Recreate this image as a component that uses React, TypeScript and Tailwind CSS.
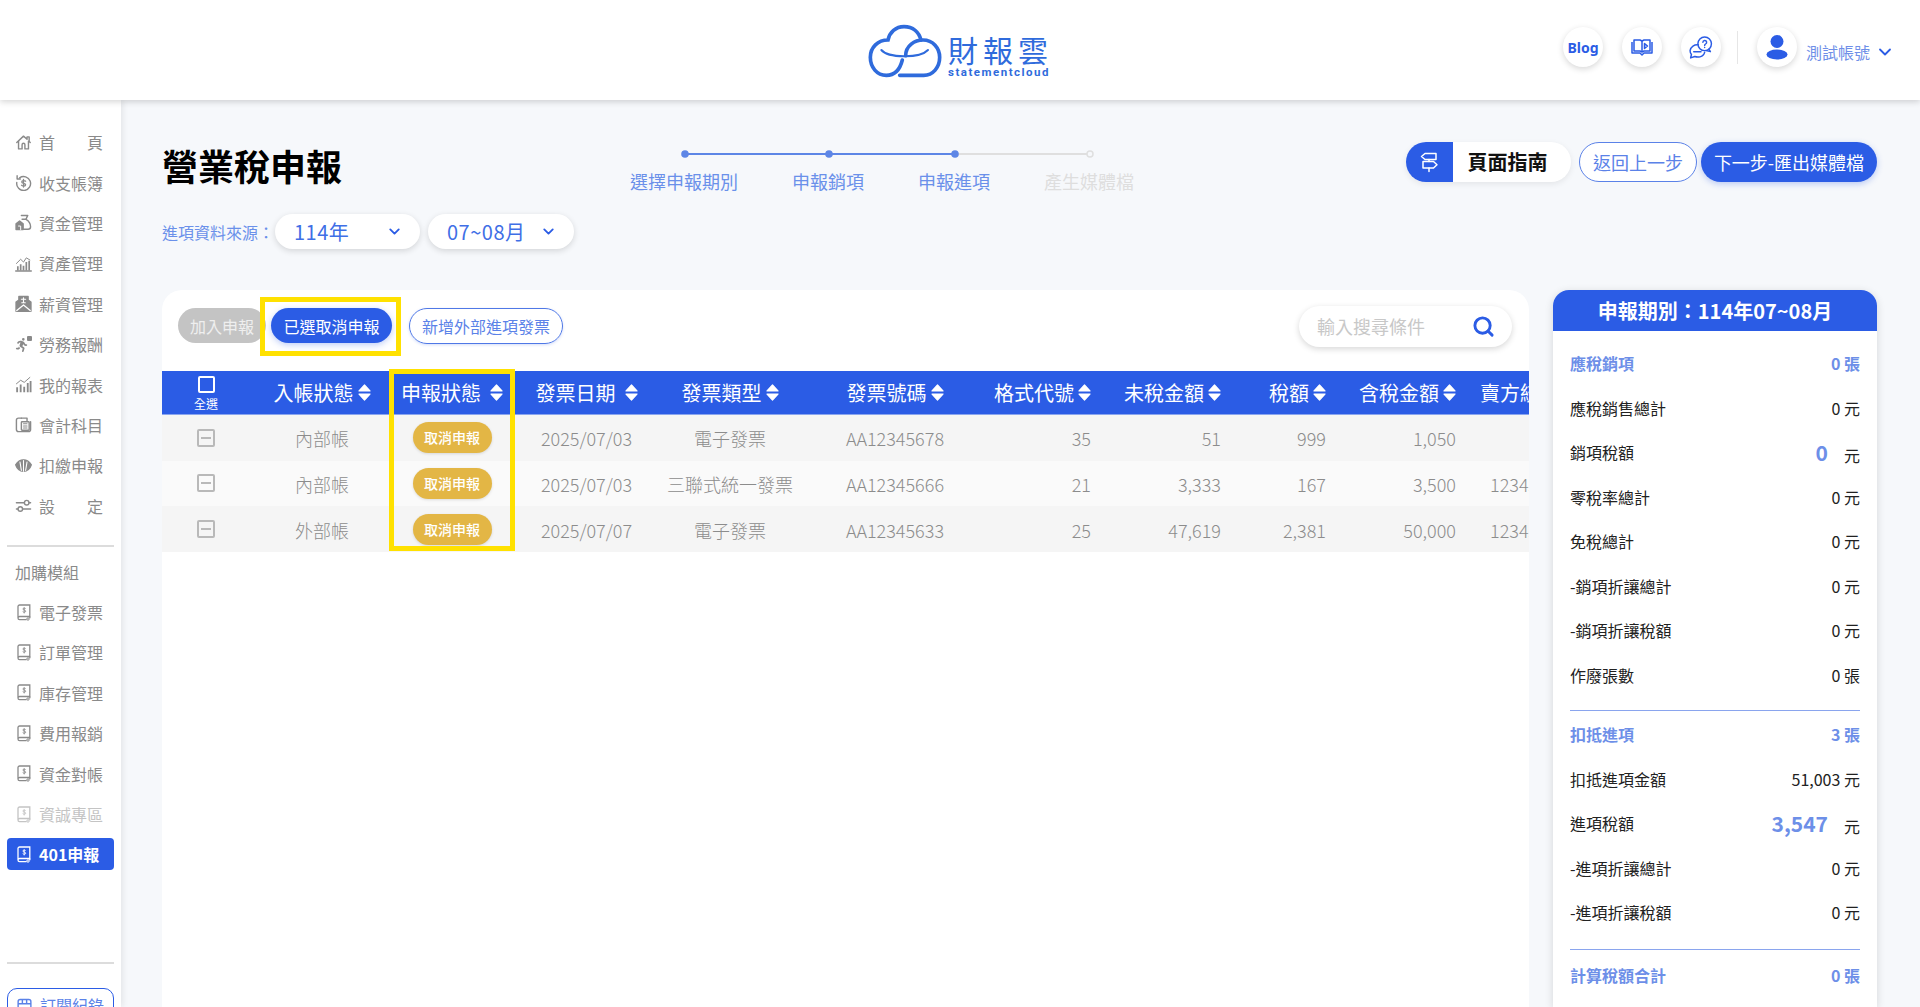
import React from 'react';
import { Search, ChevronDown } from 'lucide-react';
import { FaPersonRunning } from 'react-icons/fa6';

const Svg = ({ children, size = 17 }: { children: React.ReactNode; size?: number }) => (
  <svg width={size} height={size} viewBox="0 0 24 24" fill="none" stroke="currentColor" strokeWidth="2" strokeLinecap="round" strokeLinejoin="round" className="shrink-0">
    {children}
  </svg>
);

const HomeIcon = () => (
  <Svg>
    <path d="M2.500 12 12 3l5 4.500V4h3v6.500l1.500 1.500" />
    <path d="M5 10v11h5v-6a2 2 0 0 1 4 0v6h5V10" />
  </Svg>
);
const CycleDollarIcon = () => (
  <Svg>
    <path d="M6.500 5.500A9.800 9.800 0 1 1 2.500 12" />
    <path d="M3 2.500v4.500h4.500" />
    <path d="M15 10.200c-.7-1.300-5.500-1.500-5.500 1 0 2.500 5.500 1.400 5.500 4 0 2.500-5 2.200-5.800.7M12 7.500v11" strokeWidth="1.800" />
  </Svg>
);
const BagIcon = () => (
  <Svg>
    <path d="M9 2h9l-2.500 5.500c3.500 2 6.500 6.500 6.500 10.500 0 2.500-1.500 3.500-3.500 3.500H12" />
    <path d="M10 7.500h5.500" />
    <path d="M1.500 22v-8l5-4 5 4v8z" fill="currentColor" />
    <path d="M5 17h3v5" stroke="#fff" strokeWidth="1.400" />
  </Svg>
);
const AssetIcon = () => (
  <Svg>
    <path d="M1 22.500h22" />
    <path d="M4 22v-6M8 22v-9M12 22v-7M16 22V10M20 22V8" strokeWidth="2.400" strokeLinecap="butt" />
    <path d="M2 12l6-6 4 4 4-6 5 3" strokeWidth="1.400" />
  </Svg>
);
const MailIcon = () => (
  <Svg>
    <path d="M1.500 23V10l4-3V2h13v5l4 3v13z" fill="currentColor" />
    <path d="M2.500 22 12 14l9.500 8" stroke="#fff" strokeWidth="1.800" />
    <path d="M9 6h6M12 4v7M9.500 11h5" stroke="#fff" strokeWidth="1.600" />
  </Svg>
);
const RunIcon = () => (
  <span className="flex items-start w-[17px] shrink-0">
    <FaPersonRunning size={14} className="mt-[2px]" />
    <span className="w-[5px] h-[5px] bg-current rounded-[1px] -ml-[2px]" />
  </span>
);
const BarsIcon = () => (
  <Svg>
    <path d="M3 23v-7M8 23V12M13 23v-8M18 23V10M22 23V7" strokeWidth="2.600" strokeLinecap="butt" />
    <path d="M2 11l6-5 5 3 8-7" strokeWidth="1.400" />
  </Svg>
);
const CalcBookIcon = () => (
  <Svg>
    <path d="M9 3H5a3 3 0 0 0-3 3v13a3 3 0 0 0 3 3h14a3 3 0 0 0 3-3V8" />
    <rect x="9" y="8" width="11" height="12" rx="1" />
    <path d="M12 11h5M12 14h5M12 17h5" strokeWidth="1.500" />
    <path d="M9 3h8v4" />
  </Svg>
);
const FanIcon = () => (
  <Svg>
    <path d="M1 11c3-5 6-7 11-7s8 2 11 7c-2 6-6 9-11 9S3 17 1 11z" fill="currentColor" />
    <path d="M7 7l2 12M12 5v15M17 7l-2 12" stroke="#fff" strokeWidth="1.500" />
  </Svg>
);
const SliderIcon = () => (
  <Svg>
    <path d="M2 8h11M20 8h2M2 17h2M11 17h11" />
    <circle cx="16.500" cy="8" r="3.200" />
    <circle cx="7.500" cy="17" r="3.200" />
  </Svg>
);
const ModuleIcon = () => (
  <svg width="14" height="17" viewBox="0 0 14 17" fill="none" stroke="currentColor" className="shrink-0 ml-[2px] mr-[1px]">
    <path d="M2.600 1h10.200v11.500H2.600A1.600 1.600 0 0 0 1 14V2.600A1.600 1.600 0 0 1 2.600 1z" strokeWidth="1.300" />
    <path d="M1 14a1.600 1.600 0 0 0 1.600 1.600h7M12.800 12.500v1.800" strokeWidth="1.300" />
    <circle cx="11" cy="15" r="1.200" strokeWidth="1" />
    <path d="M8.600 4.600c-.4-.7-2.600-.9-2.700.4-.1 1.300 2.800.8 2.800 2.200 0 1.300-2.400 1.200-3 .4M7.200 3.400v6" strokeWidth="0.900" />
  </svg>
);

const Spread = ({ a, b }: { a: string; b: string }) => (
  <span className="flex justify-between w-16">
    <span>{a}</span>
    <span>{b}</span>
  </span>
);

const NavRow = ({ icon, children }: { icon: React.ReactNode; children: React.ReactNode }) => (
  <div className="flex items-center shrink-0 h-[40.4px] pl-[15px] gap-[7px] text-base text-[#8a8a8a] whitespace-nowrap">
    {icon}
    {children}
  </div>
);

const Sidebar = () => (
  <aside className="w-[121px] shrink-0 bg-white shadow-[2px_0_6px_rgba(0,0,0,0.08)] pt-[22px] relative z-10 flex flex-col overflow-hidden">
    <NavRow icon={<HomeIcon />}><Spread a="首" b="頁" /></NavRow>
    <NavRow icon={<CycleDollarIcon />}>收支帳簿</NavRow>
    <NavRow icon={<BagIcon />}>資金管理</NavRow>
    <NavRow icon={<AssetIcon />}>資產管理</NavRow>
    <NavRow icon={<MailIcon />}>薪資管理</NavRow>
    <NavRow icon={<RunIcon />}>勞務報酬</NavRow>
    <NavRow icon={<BarsIcon />}>我的報表</NavRow>
    <NavRow icon={<CalcBookIcon />}>會計科目</NavRow>
    <NavRow icon={<FanIcon />}>扣繳申報</NavRow>
    <NavRow icon={<SliderIcon />}><Spread a="設" b="定" /></NavRow>
    <div className="mx-[7px] mt-[19px] h-[2px] shrink-0 bg-[#dcdcdc]" />
    <div className="pl-[15px] mt-[13px] h-[24px] shrink-0 flex items-center text-base text-[#8a8a8a]">加購模組</div>
    <div className="mt-[8px] shrink-0">
      {['電子發票', '訂單管理', '庫存管理', '費用報銷', '資金對帳'].map((t) => (
        <NavRow key={t} icon={<ModuleIcon />}>{t}</NavRow>
      ))}
      <div className="opacity-50">
        <NavRow icon={<ModuleIcon />}>資誠專區</NavRow>
      </div>
    </div>
    <div className="mx-[7px] mt-[4px] h-8 shrink-0 rounded-[4px] bg-[#2b5ce5] text-white font-bold text-base flex items-center pl-[8px] gap-[7px] whitespace-nowrap">
      <ModuleIcon />
      <span>401申報</span>
    </div>
    <div className="mx-[7px] mt-[92px] h-[2px] shrink-0 bg-[#dcdcdc]" />
    <div className="mx-[7px] mt-[24px] h-[40px] shrink-0 rounded-[10px] border border-[#2b5ce5] text-[#5b82e8] text-base flex items-start pl-[8px] pt-[4px] gap-[7px] whitespace-nowrap">
      <svg width="17" height="17" viewBox="0 0 24 24" fill="none" stroke="currentColor" strokeWidth="2" className="mt-[3px]"><path d="M3 22V8a3 3 0 0 1 3-3h12a3 3 0 0 1 3 3v14M3 11h18M9 5v6M15 5v6" /></svg>
      <span>訂閱紀錄</span>
    </div>
  </aside>
);

const Logo = () => (
  <div className="flex items-start gap-[6px] mt-[1px]">
    <svg width="74" height="54" viewBox="145 70 222 162" fill="none" stroke="#2f6bdc" strokeLinecap="round">
      <path d="M248 178C240 210 222 224 200 224C172 224 152 200 152 170C152 140 175 118 205 118C210 95 228 78 253 78C280 78 298 95 304 118" strokeWidth="11" />
      <path d="M258 165C258 135 285 118 310 118C340 118 360 142 360 170C360 200 340 224 312 224L240 224" strokeWidth="11" />
      <path d="M185 148C205 172 300 174 325 148" strokeWidth="6" />
    </svg>
    <div className="flex flex-col items-start mt-[8px]">
      <div className="text-[30px] leading-[34px] text-[#2f6bdc] tracking-[5px] whitespace-nowrap">財報雲</div>
      <div className="text-[11.5px] leading-[12px] font-bold text-[#2f6bdc] tracking-[1.500px] [font-family:Roboto,sans-serif] whitespace-nowrap">statementcloud</div>
    </div>
  </div>
);

const Round = ({ children }: { children: React.ReactNode }) => (
  <div className="w-10 h-10 rounded-full bg-white shadow-[0_2px_6px_rgba(0,0,0,0.16)] flex items-center justify-center text-[#2b5ce5] shrink-0">
    {children}
  </div>
);

const Header = () => (
  <header className="h-[100px] shrink-0 bg-white shadow-[0_2px_6px_rgba(0,0,0,0.16)] relative z-20 flex items-center pl-[868px] pr-[25px]">
    <Logo />
    <div className="ml-auto flex items-center mb-[6px]">
      <div className="flex gap-[19px]">
        <Round><span className="text-[14px] font-bold [font-family:'Noto_Sans',sans-serif]">Blog</span></Round>
        <Round>
          <svg width="24" height="24" viewBox="0 0 24 24" fill="none" stroke="currentColor" strokeWidth="1.500" strokeLinejoin="round">
            <path d="M2 7v11h8l2 2 2-2h8V7" />
            <path d="M4 5h6l2 1 2-1h6v11h-6l-2 1-2-1H4z" />
            <path d="M12 6v11M14.500 8.500l3 2.500-3 2.500z" />
          </svg>
        </Round>
        <Round>
          <svg width="25" height="25" viewBox="0 0 24 24" fill="none" stroke="currentColor" strokeWidth="1.400" strokeLinejoin="round" strokeLinecap="round">
            <path d="M10 9.500A7 6.500 0 0 0 2 15c0 1.500.5 2.700 1.300 3.700L2.500 22l4-1.300a8.500 7.500 0 0 0 5 .3c2.800-.8 4.200-2.500 4.500-4.500" />
            <circle cx="16" cy="8.500" r="6.500" />
            <path d="M20 13.500l1.500 2.500-4-1" />
            <path d="M14.300 7a1.800 1.800 0 1 1 2.400 1.800c-.5.200-.7.600-.7 1.200M16 12v.1M5.500 16h7" />
          </svg>
        </Round>
      </div>
      <div className="w-px h-[33px] bg-[#e6e6e6] ml-[16px] mr-[19px]" />
      <Round>
        <svg width="24" height="26" viewBox="0 0 24 26" fill="currentColor">
          <circle cx="12" cy="7.500" r="6.500" />
          <ellipse cx="12" cy="20.500" rx="10.500" ry="5" />
        </svg>
      </Round>
      <span className="ml-[9px] mt-[10px] text-base text-[#6f8fe8] whitespace-nowrap">測試帳號</span>
      <ChevronDown size={20} strokeWidth={2.2} className="ml-[5px] mt-[10px] text-[#2b5ce5]" />
    </div>
  </header>
);

const Stepper = () => (
  <div className="mt-[6px] w-[505px] shrink-0">
    <svg width="420" height="12" viewBox="0 0 420 12" className="ml-[49px] block">
      <path d="M6 6H276" stroke="#5d86e6" strokeWidth="2" />
      <path d="M276 6H411" stroke="#dfdfdf" strokeWidth="2" />
      <circle cx="6" cy="6" r="3.800" fill="#5d86e6" />
      <circle cx="150" cy="6" r="3.800" fill="#5d86e6" />
      <circle cx="276" cy="6" r="3.800" fill="#5d86e6" />
      <circle cx="411" cy="6" r="3" fill="#f6f8fb" stroke="#dfdfdf" strokeWidth="1.500" />
    </svg>
    <div className="mt-[8px] flex gap-[54px] text-[18px] leading-[26px] whitespace-nowrap text-[#6a90ea]">
      <span>選擇申報期別</span>
      <span>申報銷項</span>
      <span>申報進項</span>
      <span className="text-[#dedede]">產生媒體檔</span>
    </div>
  </div>
);

const Select = ({ label, w }: { label: string; w: string }) => (
  <div className={`${w} h-[35px] rounded-full bg-white shadow-[0_2px_6px_rgba(0,0,0,0.14)] flex items-center justify-between pl-[19px] pr-[17px] text-[20px] tracking-[0.5px] text-[#3f6fe6] whitespace-nowrap`}>
    <span>{label}</span>
    <ChevronDown size={17} strokeWidth={2.600} className="text-[#2b5ce5]" />
  </div>
);

const TopRow = () => (
  <div className="flex items-start h-[107px] shrink-0">
    <div className="w-[468px] shrink-0">
      <h1 className="mt-[1px] text-[36px] leading-[44px] font-bold text-black">營業稅申報</h1>
      <div className="mt-[27px] flex items-center">
        <span className="w-[113px] shrink-0 text-base text-[#6a90ea] whitespace-nowrap">進項資料來源：</span>
        <div className="flex gap-2">
          <Select label="114年" w="w-[145px]" />
          <Select label="07~08月" w="w-[146px]" />
        </div>
      </div>
    </div>
    <Stepper />
    <div className="ml-auto flex items-center whitespace-nowrap text-[18px]">
      <div className="w-[165px] h-10 rounded-full bg-white shadow-[0_2px_6px_rgba(0,0,0,0.08)] flex items-center">
        <div className="w-[47px] h-10 rounded-l-full bg-[#2b5ce5] flex items-center justify-center text-white">
          <svg width="19" height="21" viewBox="0 0 19 21" fill="none" stroke="currentColor" strokeWidth="1.500" strokeLinejoin="round" strokeLinecap="round">
            <path d="M5 1.500h11v6H5L1.500 4.500z" />
            <path d="M3 9.500h10.500l3.500 3.200-3.500 3.300H3z" />
            <path d="M9 7.500v2M9 16v3.500" />
          </svg>
        </div>
        <span className="flex-1 text-center pr-[9px] font-bold text-[20px] text-[#111]">頁面指南</span>
      </div>
      <div className="ml-2 w-[118px] h-10 rounded-full border border-[#5b82e8] bg-white text-[#5b82e8] flex items-center justify-center">返回上一步</div>
      <div className="ml-1 w-[176px] h-10 rounded-full bg-[#2b5ce5] text-white flex items-center justify-center shadow-[0_2px_6px_rgba(43,92,229,0.3)]">下一步-匯出媒體檔</div>
    </div>
  </div>
);

const SortIcon = () => (
  <svg width="13" height="17" viewBox="0 0 13 17" fill="#fff" stroke="#fff" strokeWidth="1.200" strokeLinejoin="round" className="shrink-0">
    <path d="M6.500 1L12 7H1z" />
    <path d="M6.500 16L12 10H1z" />
  </svg>
);

const GRID = 'grid grid-cols-[88px_144px_116px_153px_134px_196px_98px_130px_105px_130px_126px] w-[1420px]';

const HeadCenter = ({ t, gap = 'gap-1' }: { t: string; gap?: string }) => (
  <div className={`flex items-center justify-center ${gap}`}>
    <span>{t}</span>
    <SortIcon />
  </div>
);
const HeadRight = ({ t }: { t: string }) => (
  <div className="flex items-center justify-end gap-1">
    <span>{t}</span>
    <SortIcon />
  </div>
);

const TableHead = () => (
  <div className={`${GRID} h-11 bg-[#2b5ce5] border-b border-[#8aa5ee] text-white text-[20px] leading-none whitespace-nowrap`}>
    <div className="flex flex-col items-center pt-[5px]">
      <div className="w-[17px] h-[17px] border-2 border-white rounded-[2px]" />
      <span className="text-[12px] leading-[14px] mt-[4px]">全選</span>
    </div>
    <HeadCenter t="入帳狀態" />
    <HeadCenter t="申報狀態" gap="gap-[9px]" />
    <HeadCenter t="發票日期" gap="gap-[9px]" />
    <HeadCenter t="發票類型" />
    <HeadCenter t="發票號碼" />
    <HeadRight t="格式代號" />
    <HeadRight t="未稅金額" />
    <HeadRight t="稅額" />
    <HeadRight t="含稅金額" />
    <div className="flex items-center pl-[24px]">賣方統編</div>
  </div>
);

const rows = [
  ['內部帳', '2025/07/03', '電子發票', 'AA12345678', '35', '51', '999', '1,050', ''],
  ['內部帳', '2025/07/03', '三聯式統一發票', 'AA12345666', '21', '3,333', '167', '3,500', '12345678'],
  ['外部帳', '2025/07/07', '電子發票', 'AA12345633', '25', '47,619', '2,381', '50,000', '12345678'],
];

const TableRows = () => (
  <div>
    {rows.map((r, i) => (
      <div key={i} className={`${GRID} h-[45.67px] items-center text-[18px] font-light text-[#8c8c8c] whitespace-nowrap ${i === 1 ? 'bg-[#fafafa]' : 'bg-[#f5f5f5]'}`}>
        <div className="flex justify-center">
          <div className="w-[18px] h-[18px] border-2 border-[#b9b9b9] rounded-[2px] flex items-center justify-center">
            <div className="w-[10px] h-[2px] bg-[#b9b9b9]" />
          </div>
        </div>
        <div className="text-center pt-[2px]">{r[0]}</div>
        <div className="flex justify-center">
          <div className="w-[79px] h-[31px] rounded-full bg-[#e3b645] text-white text-[14px] font-medium flex items-center justify-center shadow-[0_1px_3px_rgba(0,0,0,0.12)]">取消申報</div>
        </div>
        <div className="text-center pt-[2px]">{r[1]}</div>
        <div className="text-center pt-[2px]">{r[2]}</div>
        <div className="text-center pt-[2px]">{r[3]}</div>
        <div className="text-right pt-[2px]">{r[4]}</div>
        <div className="text-right pt-[2px]">{r[5]}</div>
        <div className="text-right pt-[2px]">{r[6]}</div>
        <div className="text-right pt-[2px]">{r[7]}</div>
        <div className="pl-[34px] pt-[2px]">{r[8]}</div>
      </div>
    ))}
  </div>
);

const Card = () => (
  <section className="relative w-[1367px] shrink-0 bg-white rounded-t-[20px] overflow-hidden">
    <div className="h-[81px] flex items-start pt-[18px] pl-4 pr-[17px] whitespace-nowrap text-base">
      <div className="w-[88px] h-[35px] rounded-full bg-[#c4c4c4] text-[#efefef] flex items-center justify-center">加入申報</div>
      <div className="ml-[5px] w-[121px] h-[35px] rounded-full bg-[#2b5ce5] text-white flex items-center justify-center shadow-[0_2px_6px_rgba(43,92,229,0.3)]">已選取消申報</div>
      <div className="ml-[17px] w-[154px] h-9 rounded-full border border-[#4f78e6] text-[#5b82e8] flex items-center justify-center shadow-[0_1px_3px_rgba(43,92,229,0.2)]">新增外部進項發票</div>
      <div className="ml-auto -mt-[2px] w-[213px] h-[41px] rounded-full bg-white shadow-[0_2px_6px_rgba(0,0,0,0.16)] flex items-center pl-[18px] pr-[17px] text-[18px] text-[#c8c8c8]">
        <span>輸入搜尋條件</span>
        <Search size={23} strokeWidth={3} className="ml-auto text-[#2b5ce5]" />
      </div>
    </div>
    <div className="overflow-hidden">
      <TableHead />
      <TableRows />
    </div>
    <div className="absolute left-[98px] top-[7px] w-[141px] h-[59px] border-[5px] border-[#ffe100]" />
    <div className="absolute left-[227px] top-[79px] w-[126px] h-[182px] border-[5px] border-[#ffe100]" />
  </section>
);

const PRow = ({ l, v, u, head, big }: { l: string; v: string; u: string; head?: boolean; big?: boolean }) => (
  <div className={`flex items-center justify-between h-[44.5px] text-base whitespace-nowrap ${head ? 'font-bold text-[#6d8fe8]' : 'text-[#222]'}`}>
    <span>{l}</span>
    {big ? (
      <span className="flex items-center">
        <span className="text-[21px] font-bold text-[#6d8fe8] leading-none">{v}</span>
        <span className="ml-[16px] mt-[6px]">{u}</span>
      </span>
    ) : (
      <span>{v} {u}</span>
    )}
  </div>
);

const Panel = () => (
  <aside className="ml-6 w-[324px] shrink-0 bg-white shadow-[0_2px_8px_rgba(0,0,0,0.14)] rounded-t-[16px] overflow-hidden">
    <div className="h-[41px] bg-[#2b5ce5] text-white font-bold text-[20px] flex items-center justify-center whitespace-nowrap">申報期別：114年07~08月</div>
    <div className="px-[17px] pt-[10px]">
      <PRow l="應稅銷項" v="0" u="張" head />
      <PRow l="應稅銷售總計" v="0" u="元" />
      <PRow l="銷項稅額" v="0" u="元" big />
      <PRow l="零稅率總計" v="0" u="元" />
      <PRow l="免稅總計" v="0" u="元" />
      <PRow l="-銷項折讓總計" v="0" u="元" />
      <PRow l="-銷項折讓稅額" v="0" u="元" />
      <PRow l="作廢張數" v="0" u="張" />
      <div className="mt-[13px] mb-[1px] h-px bg-[#8aa5ee]" />
      <PRow l="扣抵進項" v="3" u="張" head />
      <PRow l="扣抵進項金額" v="51,003" u="元" />
      <PRow l="進項稅額" v="3,547" u="元" big />
      <PRow l="-進項折讓總計" v="0" u="元" />
      <PRow l="-進項折讓稅額" v="0" u="元" />
      <div className="mt-[14px] mb-[3px] h-px bg-[#8aa5ee]" />
      <PRow l="計算稅額合計" v="0" u="張" head />
    </div>
  </aside>
);

export default function App() {
  return (
    <div className="w-[1920px] h-[1007px] overflow-hidden flex flex-col bg-[#f6f8fb] [font-family:'Noto_Sans_CJK_TC','Noto_Sans',sans-serif]">
      <Header />
      <div className="flex-1 flex min-h-0">
        <Sidebar />
        <main className="flex-1 min-w-0 flex flex-col pt-[42px] pl-[41px] pr-[43px]">
          <TopRow />
          <div className="mt-[41px] flex flex-1 min-h-0">
            <Card />
            <Panel />
          </div>
        </main>
      </div>
    </div>
  );
}
